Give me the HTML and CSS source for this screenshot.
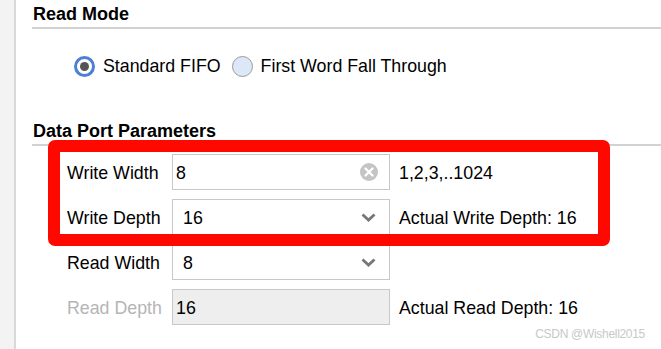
FILE: index.html
```html
<!DOCTYPE html>
<html lang="en">
<head>
    <meta charset="UTF-8">
    <meta name="viewport" content="width=device-width, initial-scale=1.0">
    <title>FIFO Generator - Native Ports</title>
    <link rel="stylesheet" href="styles.css">
</head>
<body>
    <div class="page">
        <!-- 左侧边栏 -->
        <div class="sidebar"></div>

        <div class="main">
            <!-- 读模式 -->
            <section class="group">
                <h2 class="group-title">Read Mode</h2>
                <div class="radio-row">
                    <label class="radio">
                        <span class="radio-dot checked"></span>
                        <span>Standard FIFO</span>
                    </label>
                    <label class="radio">
                        <span class="radio-dot"></span>
                        <span>First Word Fall Through</span>
                    </label>
                </div>
            </section>

            <!-- 数据端口参数 -->
            <section class="group">
                <h2 class="group-title group-title-second">Data Port Parameters</h2>
                <div class="param-grid">
                    <div class="param-label">Write Width</div>
                    <div class="field field-input">
                        <span class="field-value">8</span>
                        <svg class="clear-icon" width="18" height="18" viewBox="0 0 18 18">
                            <circle cx="9" cy="9" r="9" fill="#c4c4c4"/>
                            <path d="M5.5 5.5 L12.5 12.5 M12.5 5.5 L5.5 12.5" stroke="#fff" stroke-width="2.4" stroke-linecap="round"/>
                        </svg>
                    </div>
                    <div class="param-hint">1,2,3,..1024</div>

                    <div class="param-label">Write Depth</div>
                    <div class="field field-select">
                        <span class="field-value">16</span>
                        <svg class="chevron" width="15" height="9" viewBox="0 0 15 9">
                            <polyline points="1.5,1.5 7.5,7 13.5,1.5" fill="none" stroke="#777" stroke-width="2.8"/>
                        </svg>
                    </div>
                    <div class="param-hint">Actual Write Depth: 16</div>

                    <div class="param-label">Read Width</div>
                    <div class="field field-select">
                        <span class="field-value">8</span>
                        <svg class="chevron" width="15" height="9" viewBox="0 0 15 9">
                            <polyline points="1.5,1.5 7.5,7 13.5,1.5" fill="none" stroke="#777" stroke-width="2.8"/>
                        </svg>
                    </div>
                    <div class="param-hint"></div>

                    <div class="param-label disabled">Read Depth</div>
                    <div class="field field-input field-disabled">
                        <span class="field-value">16</span>
                    </div>
                    <div class="param-hint">Actual Read Depth: 16</div>
                </div>
            </section>
        </div>

        <!-- 红框标注 -->
        <div class="highlight"></div>

        <div class="watermark">CSDN @Wishell2015</div>
    </div>
</body>
</html>
```

FILE: styles.css
```css
* {
    margin: 0;
    padding: 0;
    box-sizing: border-box;
}

body {
    background: #fff;
    font-family: "Liberation Sans", Arial, sans-serif;
    color: #000;
    overflow: hidden;
}

.page {
    position: relative;
    display: flex;
    width: 661px;
    height: 349px;
}

/* 左侧边栏 */
.sidebar {
    width: 16px;
    flex-shrink: 0;
    background: #f3f3f3;
    border-right: 2px solid #d9d9d9;
}

.main {
    flex: 1;
    padding-left: 16px;
}

/* 分组标题 */
.group-title {
    font-size: 18px;
    font-weight: bold;
    line-height: 20px;
    padding: 4px 0 3px 1px;
    border-bottom: 2px solid #d2d2d2;
}

.group-title-second {
    margin-top: 39px;
}

/* 单选按钮 */
.radio-row {
    display: flex;
    align-items: center;
    height: 24px;
    margin-top: 25px;
    padding-left: 42px;
    font-size: 17.8px;
}

.radio {
    display: flex;
    align-items: center;
    gap: 8px;
    margin-right: 11px;
}

.radio-dot {
    width: 21px;
    height: 21px;
    border-radius: 50%;
    background: #dce8f8;
    border: 1.5px solid #9a9a9a;
    display: flex;
    justify-content: center;
    align-items: center;
}

.radio-dot.checked {
    background: #fff;
    border: 3px solid #4d7fd8;
}

.radio-dot.checked::after {
    content: "";
    width: 9px;
    height: 9px;
    border-radius: 50%;
    background: #555;
}

/* 参数表格 */
.param-grid {
    display: grid;
    grid-template-columns: 106px 218px auto;
    grid-auto-rows: 36px;
    row-gap: 9px;
    margin-top: 8px;
    padding-left: 34px;
    font-size: 17.8px;
}

.param-label {
    display: flex;
    align-items: center;
    padding: 3px 0 0 1px;
}

.param-label.disabled {
    color: #b5b5b5;
}

.field {
    display: flex;
    align-items: center;
    justify-content: space-between;
    border: 1px solid #c8c8c8;
    background: #fff;
}

.field-value {
    padding-top: 3px;
}

.field-input {
    padding: 0 11px 0 3px;
}

.field-select {
    padding: 0 13px 0 10px;
}

.field-disabled {
    background: #eee;
}

.param-hint {
    display: flex;
    align-items: center;
    padding: 3px 0 0 9px;
}

/* 红框标注 */
.highlight {
    position: absolute;
    left: 48px;
    top: 140px;
    width: 562px;
    height: 106px;
    border: 12px solid #ff0800;
    border-radius: 7px;
}

.watermark {
    position: absolute;
    right: 16px;
    bottom: 8px;
    font-size: 12px;
    letter-spacing: -0.3px;
    color: #c8c8c8;
}
```
